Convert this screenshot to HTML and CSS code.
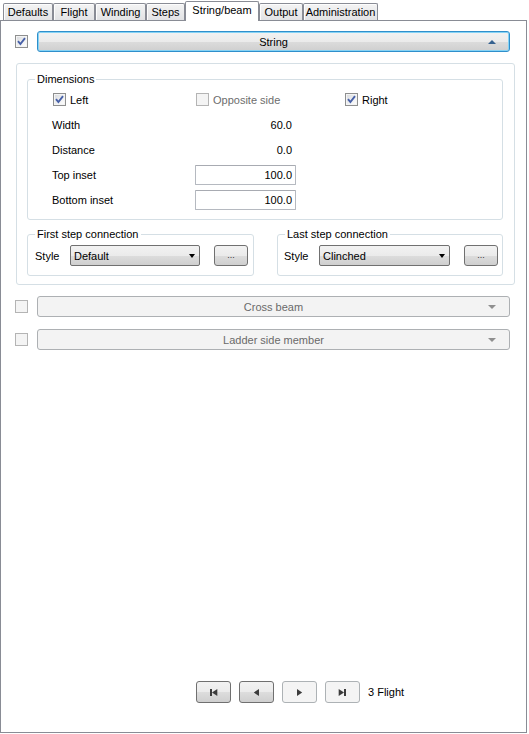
FILE: index.html
```html
<!DOCTYPE html>
<html>
<head>
<meta charset="utf-8">
<link rel="stylesheet" href="styles.css">
</head>
<body>
<div class="window">
  <div class="tabs">
    <div class="tab t1">Defaults</div>
    <div class="tab t2">Flight</div>
    <div class="tab t3">Winding</div>
    <div class="tab t4">Steps</div>
    <div class="tab t5 selected">String/beam</div>
    <div class="tab t6">Output</div>
    <div class="tab t7">Administration</div>
  </div>
  <div class="panel">
    <div class="section-row">
      <span class="cb checked"><svg viewBox="0 0 11 11" width="11" height="11"><polyline points="2,5.2 4.4,8 9,2.2" fill="none" stroke="#4760a8" stroke-width="1.9"/></svg></span>
      <div class="header-btn focused">
        <span></span>
        <span class="header-label">String</span>
        <span class="tri up"></span>
      </div>
    </div>

    <div class="outer-box">
      <div class="group dims">
        <div class="legend">Dimensions</div>
        <div class="dim-grid">
          <label class="chk"><span class="cb checked"><svg viewBox="0 0 11 11" width="11" height="11"><polyline points="2,5.2 4.4,8 9,2.2" fill="none" stroke="#4760a8" stroke-width="1.9"/></svg></span>Left</label>
          <label class="chk disabled"><span class="cb off"></span>Opposite side</label>
          <label class="chk right"><span class="cb checked"><svg viewBox="0 0 11 11" width="11" height="11"><polyline points="2,5.2 4.4,8 9,2.2" fill="none" stroke="#4760a8" stroke-width="1.9"/></svg></span>Right</label>

          <span class="lbl">Width</span><span class="val">60.0</span><span></span>
          <span class="lbl">Distance</span><span class="val">0.0</span><span></span>
          <span class="lbl">Top inset</span><span class="field">100.0</span><span></span>
          <span class="lbl">Bottom inset</span><span class="field">100.0</span><span></span>
        </div>
      </div>

      <div class="conn-row">
        <div class="group conn first">
          <div class="legend">First step connection</div>
          <div class="conn-body">
            <span class="style-label">Style</span>
            <div class="combo w130"><span>Default</span><span class="tri down dark"></span></div>
            <div class="dots">...</div>
          </div>
        </div>
        <div class="group conn last">
          <div class="legend">Last step connection</div>
          <div class="conn-body">
            <span class="style-label">Style</span>
            <div class="combo w131"><span>Clinched</span><span class="tri down dark"></span></div>
            <div class="dots">...</div>
          </div>
        </div>
      </div>
    </div>

    <div class="section-row cross">
      <span class="cb off"></span>
      <div class="header-btn collapsed">
        <span></span>
        <span class="header-label">Cross beam</span>
        <span class="tri down grey"></span>
      </div>
    </div>
    <div class="section-row ladder">
      <span class="cb off"></span>
      <div class="header-btn collapsed">
        <span></span>
        <span class="header-label">Ladder side member</span>
        <span class="tri down grey"></span>
      </div>
    </div>

    <div class="nav">
      <div class="nav-btn"><svg viewBox="0 0 9 9" width="9" height="9"><rect x="1" y="1" width="2" height="7" fill="#3c3c3c"/><polygon points="8.3,1 8.3,8 3,4.5" fill="#3c3c3c"/></svg></div>
      <div class="nav-btn"><svg viewBox="0 0 9 9" width="9" height="9"><polygon points="7,1 7,8 1.8,4.5" fill="#3c3c3c"/></svg></div>
      <div class="nav-btn disabled"><svg viewBox="0 0 9 9" width="9" height="9"><polygon points="2,1 2,8 7.2,4.5" fill="#3c3c3c"/></svg></div>
      <div class="nav-btn disabled"><svg viewBox="0 0 9 9" width="9" height="9"><polygon points="0.7,1 0.7,8 6,4.5" fill="#3c3c3c"/><rect x="6" y="1" width="2" height="7" fill="#3c3c3c"/></svg></div>
      <span class="nav-text">3 Flight</span>
    </div>
  </div>
</div>
</body>
</html>
```

FILE: styles.css
```css
* { box-sizing: border-box; }

body {
  margin: 0;
  background: #ffffff;
  font-family: "Liberation Sans", Arial, sans-serif;
  font-size: 11px;
  color: #000;
}

.window {
  width: 529px;
  height: 734px;
}

/* ---------- tabs ---------- */
.tabs {
  display: flex;
  align-items: flex-end;
  height: 20px;
  padding-left: 3px;
}

.tab {
  height: 17px;
  border: 1px solid #898c95;
  border-bottom: none;
  border-radius: 2px 2px 0 0;
  background: linear-gradient(#f4f4f4, #e2e3e5);
  box-shadow: inset 1px 1px 0 #fdfdfd;
  text-align: center;
  line-height: 16px;
  white-space: nowrap;
}

.t1 { width: 50px; }
.t2 { width: 42px; }
.t3 { width: 51px; }
.t4 { width: 39px; }
.t5 { width: 74px; }
.t6 { width: 44px; }
.t7 { width: 75px; }

.tab.selected {
  height: 20px;
  margin-bottom: -1px;
  background: #ffffff;
  box-shadow: none;
  position: relative;
  z-index: 1;
  line-height: 16px;
  padding-bottom: 3px;
}

/* ---------- panel ---------- */
.panel {
  width: 527px;
  height: 713px;
  border: 1px solid #898c95;
  background: #fff;
  display: flex;
  flex-direction: column;
  padding: 10px 11px 29px 14px;
}

.section-row {
  display: flex;
  align-items: center;
  height: 21px;
  margin-right: 5px;
}

.section-row.cross { margin-top: 11px; }
.section-row.ladder { margin-top: 12px; }

/* checkboxes */
.cb {
  width: 13px;
  height: 13px;
  flex: none;
  border: 1px solid #8e8f8f;
  background: linear-gradient(135deg, #d6d8dc 0%, #f1f2f3 60%, #ffffff 100%);
  box-shadow: inset 0 0 0 1px #f4f4f4;
  display: flex;
  align-items: center;
  justify-content: center;
}

.cb svg { display: block; }

.cb.off {
  border-color: #b4b4b4;
  background: #f4f4f4;
  box-shadow: none;
}

/* header buttons */
.header-btn {
  flex: 1;
  height: 21px;
  margin-left: 9px;
  border-radius: 3px;
  display: grid;
  grid-template-columns: 1fr auto 1fr;
  align-items: center;
  padding-right: 13px;
}

.header-btn.focused {
  border: 1px solid #2f8fcb;
  box-shadow: inset 0 0 0 1px #86d3f5;
  background: linear-gradient(#f2f2f2 0%, #ebebeb 50%, #dcdcdc 51%, #cfcfcf 100%);
}

.header-btn.collapsed {
  border: 1px solid #adb0b3;
  background: #f3f3f3;
  color: #6a6a6a;
}

.header-label { text-align: center; padding-left: 13px; }

.tri {
  width: 0;
  height: 0;
  justify-self: end;
  border-left: 4px solid transparent;
  border-right: 4px solid transparent;
}

.tri.up { border-bottom: 4px solid #35618f; }
.tri.down { border-top: 4px solid #000; }
.tri.down.grey { border-top-color: #8f8f8f; }
.tri.down.dark {
  border-left-width: 3.5px;
  border-right-width: 3.5px;
  border-top-color: #000;
}

/* ---------- group boxes ---------- */
.outer-box {
  margin-top: 11px;
  margin-left: 1px;
  border: 1px solid #d5dfe5;
  border-radius: 3px;
  padding: 15px 11px 8px 10px;
}

.group {
  border: 1px solid #d5dfe5;
  border-radius: 3px;
}

.legend {
  width: fit-content;
  margin-top: -8px;
  margin-left: 7px;
  padding: 0 2px;
  background: #fff;
  line-height: 14px;
  white-space: nowrap;
}

.dim-grid {
  margin-top: 1px;
  padding-left: 24px;
  padding-bottom: 7px;
  display: grid;
  grid-template-columns: 143px 101px 1fr;
  grid-auto-rows: 25px;
  align-items: center;
}

.chk {
  display: flex;
  align-items: center;
  gap: 4px;
  white-space: nowrap;
}

.chk .cb { margin-left: 1px; }

.chk.right { margin-left: 48px; }

.chk.disabled { color: #6d6d6d; }

.val {
  text-align: right;
  padding-right: 4px;
}

.field {
  height: 20px;
  border: 1px solid #b5b9c0;
  border-top-color: #a8abb2;
  border-radius: 1px;
  background: #fff;
  text-align: right;
  padding-right: 3px;
  line-height: 18px;
}

.conn-row {
  margin-top: 14px;
  display: flex;
  gap: 23px;
}

.conn.first { width: 227px; }
.conn.last { width: 226px; }

.conn-body {
  margin-top: 4px;
  margin-bottom: 9px;
  height: 21px;
  display: flex;
  align-items: center;
  padding-left: 7px;
}

.conn.last .conn-body { padding-left: 6px; }

.style-label { width: 35px; }

.combo {
  height: 21px;
  border: 1px solid #707070;
  border-radius: 2px;
  background: linear-gradient(#f2f2f2 0%, #ebebeb 50%, #dddddd 51%, #cfcfcf 100%);
  display: flex;
  align-items: center;
  justify-content: space-between;
  padding: 0 4px 0 3px;
}

.combo.w130 { width: 130px; }
.combo.w131 { width: 131px; }

.dots {
  width: 34px;
  height: 21px;
  margin-left: 14px;
  border: 1px solid #707070;
  border-radius: 3px;
  background: linear-gradient(#f2f2f2 0%, #ebebeb 50%, #dddddd 51%, #cfcfcf 100%);
  text-align: center;
  line-height: 19px;
  font-size: 9px;
  color: #333;
}

/* ---------- navigation ---------- */
.nav {
  margin-top: auto;
  padding-left: 181px;
  display: flex;
  align-items: center;
  gap: 8px;
  height: 22px;
}

.nav-btn {
  width: 35px;
  height: 22px;
  border: 1px solid #707070;
  border-radius: 3px;
  background: linear-gradient(#f2f2f2 0%, #ebebeb 50%, #dddddd 51%, #cfcfcf 100%);
  display: flex;
  align-items: center;
  justify-content: center;
}

.nav-btn svg { display: block; }

.nav-btn.disabled {
  border-color: #adb2b5;
  background: #f4f4f4;
}

.nav-text { white-space: nowrap; }
```
